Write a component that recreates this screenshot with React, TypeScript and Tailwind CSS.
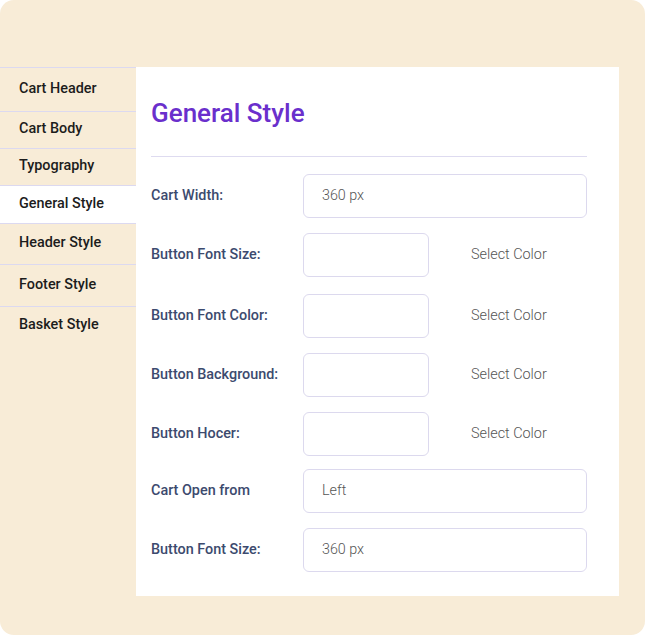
import React from "react";

const side = [
  { t: "Cart Header", h: "h-[44px]" },
  { t: "Cart Body", h: "h-[37px]" },
  { t: "Typography", h: "h-[37px]" },
  { t: "General Style", h: "h-[38px]", active: true },
  { t: "Header Style", h: "h-[41px]" },
  { t: "Footer Style", h: "h-[42px]" },
  { t: "Basket Style", h: "h-[38px]" },
];

type Row = { label: string; kind: "wide" | "color"; value?: string; mt: string };
const rows: Row[] = [
  { label: "Cart Width:", kind: "wide", value: "360 px", mt: "mt-0" },
  { label: "Button Font Size:", kind: "color", mt: "mt-[15px]" },
  { label: "Button Font Color:", kind: "color", mt: "mt-[17px]" },
  { label: "Button Background:", kind: "color", mt: "mt-[15px]" },
  { label: "Button Hocer:", kind: "color", mt: "mt-[15px]" },
  { label: "Cart Open from", kind: "wide", value: "Left", mt: "mt-[13px]" },
  { label: "Button Font Size:", kind: "wide", value: "360 px", mt: "mt-[15px]" },
];

export default function App() {
  return (
    <div
      className="w-[645px] h-[635px] rounded-[14px] bg-[#f8ecd7] pt-[67px] overflow-hidden"
      style={{ fontFamily: "Roboto, 'Noto Sans', sans-serif" }}
    >
      <div className="flex">
        <div className="w-[136px] flex flex-col">
          {side.map((s) => (
            <div
              key={s.t}
              className={`${s.h} flex items-center pl-[19px] pb-[2px] border-t border-[#dcd9f0] text-[14.4px] font-medium text-[#1c1c1c] ${
                s.active ? "bg-white" : ""
              }`}
            >
              {s.t}
            </div>
          ))}
        </div>
        <div className="w-[483px] h-[529px] bg-white pl-[15px] pr-[32px] pt-[29px]">
          <h1 className="text-[26px] leading-[34px] font-medium text-[#6a2fcc]">General Style</h1>
          <div className="mt-[26px] h-px bg-[#dedbf0]" />
          <div className="mt-[17px] flex flex-col">
            {rows.map((r, i) => (
              <div key={i} className={`flex items-center h-[44px] ${r.mt}`}>
                <div className="w-[152px] pb-[1px] text-[14.4px] font-medium text-[#3c4a6e]">{r.label}</div>
                {r.kind === "wide" ? (
                  <div className="w-[284px] h-[44px] rounded-[6px] border border-[#dcd9ee] flex items-center pl-[18px] text-[14.3px] text-[#555] font-light">
                    {r.value}
                  </div>
                ) : (
                  <>
                    <div className="w-[126px] h-[44px] rounded-[6px] border border-[#dcd9ee]" />
                    <div className="ml-[42px] text-[14.4px] font-light text-[#555]">Select Color</div>
                  </>
                )}
              </div>
            ))}
          </div>
        </div>
      </div>
    </div>
  );
}
